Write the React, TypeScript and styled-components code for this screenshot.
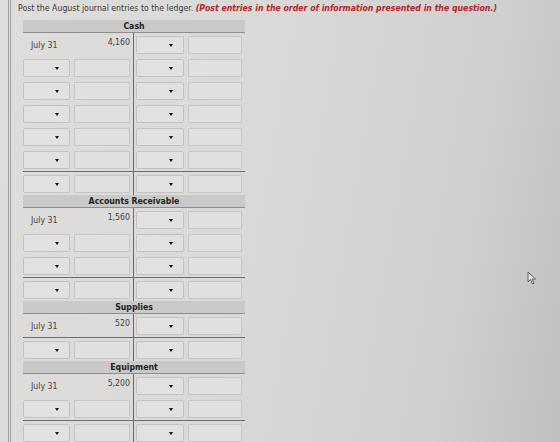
import styled, { createGlobalStyle } from "styled-components";

// Ledger data: each account shows its July 31 balance, then blank posting rows
type Account = {
  name: string;
  balance: string;
  rows: number;
};

const accounts: Account[] = [
  { name: "Cash", balance: "4,160", rows: 5 },
  { name: "Accounts Receivable", balance: "1,560", rows: 2 },
  { name: "Supplies", balance: "520", rows: 0 },
  { name: "Equipment", balance: "5,200", rows: 1 },
  { name: "Accounts Payable", balance: "", rows: 2 },
];

const GlobalStyle = createGlobalStyle`
  html, body {
    margin: 0;
    padding: 0;
    height: 442px;
    overflow: hidden;
  }
  body {
    background: linear-gradient(100deg, #dedddb 0%, #d9d9d8 45%, #cfcfce 80%, #bfbfbf 100%);
    font-family: "DejaVu Sans Condensed", "DejaVu Sans", Verdana, sans-serif;
    color: #333;
  }
`;

const Page = styled.div`
  position: relative;
  height: 442px;
  margin-left: 8px;
  border-left: 3px double #a3a3a3;
  padding: 3px 0 0 7px;
  box-sizing: border-box;
`;

const Instruction = styled.p`
  margin: 0;
  font-size: 8.7px;
  line-height: 10px;
  color: #3a3a3a;
  white-space: nowrap;
`;

const Note = styled.span`
  color: #b3262d;
  font-weight: bold;
  font-style: italic;
`;

const Ledgers = styled.div`
  margin: 7px 0 0 5px;
  width: 222px;
`;

const Header = styled.div`
  height: 12px;
  line-height: 12px;
  background: #c9c9c9;
  border-bottom: 1px solid #8e8e8e;
  text-align: center;
  font-size: 8.7px;
  font-weight: bold;
  color: #222;
`;

const Row = styled.div<{ $total?: boolean }>`
  display: flex;
  border-top: ${(p) => (p.$total ? "1px solid #6e6e6e" : "none")};
`;

const Side = styled.div<{ $right?: boolean }>`
  display: flex;
  align-items: center;
  gap: 4px;
  width: ${(p) => (p.$right ? "111px" : "110px")};
  box-sizing: border-box;
  padding: ${(p) => (p.$right ? "3px 2px 2px 2px" : "3px 3px 2px 0")};
  border-left: ${(p) => (p.$right ? "1px solid #6a6a6a" : "none")};
`;

const Select = styled.div<{ $w: number }>`
  position: relative;
  width: ${(p) => p.$w}px;
  height: 18px;
  box-sizing: border-box;
  background: #e1e1e0;
  border: 1px solid #c2c2c2;
  border-radius: 2px;

  &::after {
    content: "";
    position: absolute;
    right: 10px;
    top: 7px;
    border-left: 2px solid transparent;
    border-right: 2px solid transparent;
    border-top: 3px solid #111;
  }
`;

const Field = styled.div<{ $w: number }>`
  width: ${(p) => p.$w}px;
  height: 18px;
  box-sizing: border-box;
  background: #e0e0df;
  border: 1px solid #c6c6c6;
  border-radius: 1px;
`;

const Balance = styled.div`
  display: flex;
  justify-content: space-between;
  align-items: center;
  width: 110px;
  height: 23px;
  box-sizing: border-box;
  padding: 0 3px 0 8px;
  font-size: 8.7px;
  color: #444;
`;

const Amount = styled.span`
  margin-top: -5px;
`;

const Pointer = styled.svg`
  position: absolute;
  left: 516px;
  top: 271px;
`;

const CreditSide = () => (
  <Side $right>
    <Select $w={48} />
    <Field $w={55} />
  </Side>
);

const PostingRow = ({ total }: { total?: boolean }) => (
  <Row $total={total}>
    <Side>
      <Select $w={47} />
      <Field $w={56} />
    </Side>
    <CreditSide />
  </Row>
);

const Ledger = ({ account }: { account: Account }) => (
  <div>
    <Header>{account.name}</Header>
    {account.balance && (
      <Row>
        <Balance>
          <span>July 31</span>
          <Amount>{account.balance}</Amount>
        </Balance>
        <CreditSide />
      </Row>
    )}
    {Array.from({ length: account.rows }).map((_, i) => (
      <PostingRow key={i} />
    ))}
    <PostingRow total />
  </div>
);

export default function App() {
  return (
    <>
      <GlobalStyle />
      <Page>
        <Instruction>
          Post the August journal entries to the ledger.{" "}
          <Note>(Post entries in the order of information presented in the question.)</Note>
        </Instruction>
        <Ledgers>
          {accounts.map((a) => (
            <Ledger key={a.name} account={a} />
          ))}
        </Ledgers>
        <Pointer width="10" height="14" viewBox="0 0 10 14">
          <path d="M1 1 L1 11 L3.5 8.5 L5.5 13 L7 12.3 L5 8 L8.5 8 Z" fill="#e4e4e4" stroke="#555" strokeWidth="0.9" />
        </Pointer>
      </Page>
    </>
  );
}
